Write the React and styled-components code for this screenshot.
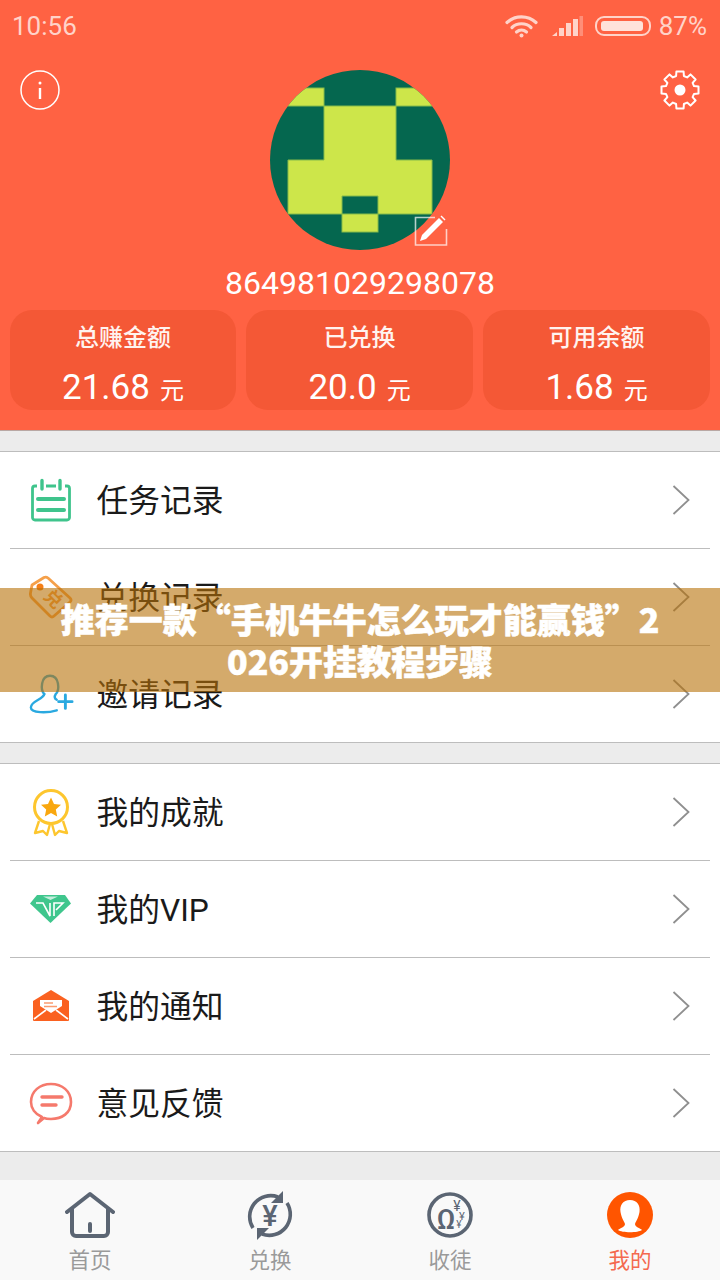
import React from 'react';
import styled, { createGlobalStyle } from 'styled-components';

const font = `Roboto, 'Noto Sans CJK SC', sans-serif`;

const GlobalStyle = createGlobalStyle`
    html, body {
        margin: 0;
        padding: 0;
        background: #ececec;
    }
    * {
        box-sizing: border-box;
    }
`;

const Screen = styled.div`
    position: relative;
    display: flex;
    flex-direction: column;
    width: 720px;
    height: 1280px;
    overflow: hidden;
    background: #ececec;
    font-family: ${font};
`;

const Header = styled.header`
    height: 431px;
    flex-shrink: 0;
    background: #ff6243;
    border-bottom: 1px solid #b9a8a4;
`;

const StatusBar = styled.div`
    display: flex;
    align-items: center;
    height: 48px;
    padding: 4px 13px 0 12px;
    color: #ffd3c9;
    font-size: 26px;
`;

const Clock = styled.span`
    margin-right: auto;
`;

const StatusIcon = styled.svg`
    display: block;
    margin-right: ${(p) => p.$gap}px;
`;

const TopRow = styled.div`
    display: flex;
    justify-content: space-between;
    align-items: flex-start;
    margin-top: 22px;
    padding: 0 20px;
`;

const Avatar = styled.div`
    position: relative;
    width: 180px;
    height: 180px;
`;

const EditBadge = styled.svg`
    position: absolute;
    left: 144px;
    top: 144px;
`;

const UserId = styled.div`
    margin-top: 13px;
    height: 40px;
    line-height: 40px;
    text-align: center;
    color: #fff;
    font-size: 32px;
`;

const Stats = styled.div`
    display: grid;
    grid-template-columns: 226px 227px 227px;
    gap: 10px;
    margin-top: 7px;
    padding: 0 10px;
`;

const StatCard = styled.div`
    height: 100px;
    border-radius: 22px;
    background: #f45836;
    color: #fff;
    text-align: center;
`;

const StatTitle = styled.div`
    padding-top: 11px;
    line-height: 34px;
    font-size: 24px;
    font-weight: 500;
    color: #fff3ef;
`;

const StatValue = styled.div`
    margin-top: 10px;
    line-height: 46px;
    font-size: 35px;
`;

const StatUnit = styled.span`
    margin-left: 10px;
    font-size: 24px;
`;

const List = styled.section`
    flex-shrink: 0;
    margin-top: ${(p) => p.$top}px;
    background: #fff;
    border-top: 1px solid #bdbdbd;
    border-bottom: 1px solid #bdbdbd;
`;

const Row = styled.div`
    display: flex;
    align-items: center;
    height: 97px;
    margin: 0 10px;
    padding: 0 20px 0 18px;
    border-bottom: 1px solid #bdbdbd;

    &:last-child {
        height: 96px;
        border-bottom: 0;
    }
`;

const RowIcon = styled.div`
    display: flex;
    justify-content: center;
    align-items: center;
    flex-shrink: 0;
    width: 46px;
    height: 54px;
    margin-right: 22.5px;
`;

const RowLabel = styled.span`
    flex: 1;
    margin-bottom: 4px;
    color: #1a1a1a;
    font-size: 31.75px;
`;

const Nav = styled.nav`
    display: grid;
    grid-template-columns: repeat(4, 1fr);
    height: 100px;
    margin-top: auto;
    background: #f9f9f9;
`;

const NavItem = styled.div`
    display: flex;
    flex-direction: column;
    align-items: center;
    padding-top: 11px;
`;

const NavLabel = styled.span`
    margin-top: 8px;
    line-height: 24px;
    font-size: 21.5px;
    color: ${(p) => (p.$active ? '#f4694f' : '#9a9a9a')};
`;

const Banner = styled.div`
    position: absolute;
    left: 0;
    top: 588px;
    display: flex;
    align-items: center;
    justify-content: center;
    width: 720px;
    height: 104px;
    padding: 0 55px;
    background: rgba(184, 113, 8, 0.6);
    color: #fff;
    font-family: 'Noto Sans CJK SC', sans-serif;
    font-size: 34px;
    font-weight: 900;
    line-height: 42px;
    text-align: center;
    word-break: break-all;
    -webkit-text-stroke: 0.5px #fff;
`;

const gearPoints = Array.from({ length: 8 }, (_, i) => {
    const a = (i * Math.PI) / 4 - Math.PI / 2;
    const pt = (r, d) =>
        `${(20 + r * Math.cos(a + d)).toFixed(1)},${(20 + r * Math.sin(a + d)).toFixed(1)}`;
    return [pt(14.5, -0.27), pt(18.8, -0.19), pt(18.8, 0.19), pt(14.5, 0.27)].join(' ');
}).join(' ');

const WifiIcon = () => (
    <StatusIcon $gap={14} width="33" height="24" viewBox="0 0 33 24" fill="none" stroke="#ffd3c9" strokeWidth="3.2" strokeLinecap="round">
        <path d="M2 8.5C10 1 23 1 31 8.5" />
        <path d="M7 13.5C12 8.5 21 8.5 26 13.5" />
        <path d="M11.5 18C14.5 15.5 18.5 15.5 21.5 18" />
        <circle cx="16.5" cy="21.5" r="2" fill="#ffd3c9" stroke="none" />
    </StatusIcon>
);

const SignalIcon = () => (
    <StatusIcon $gap={12} width="31" height="20" viewBox="0 0 31 20" fill="#ffd3c9">
        <path d="M0 20l5-4v4z" />
        <rect x="7" y="12" width="5" height="8" />
        <rect x="14" y="7" width="5" height="13" />
        <rect x="21" y="3" width="5" height="17" />
        <rect x="27.5" y="0" width="3.5" height="20" opacity="0.4" />
    </StatusIcon>
);

const BatteryIcon = () => (
    <StatusIcon $gap={7} width="57" height="20" viewBox="0 0 57 20" fill="none">
        <rect x="1" y="1" width="54" height="18" rx="8" stroke="#ffd3c9" strokeWidth="2" />
        <rect x="6" y="5" width="42" height="10" rx="3" fill="#ffe2da" />
    </StatusIcon>
);

const InfoIcon = () => (
    <svg width="40" height="40" viewBox="0 0 40 40" fill="none" stroke="#fff">
        <circle cx="20" cy="20" r="19" strokeWidth="1.5" />
        <circle cx="20" cy="13" r="1.5" fill="#fff" stroke="none" />
        <path d="M20 18v11" strokeWidth="2.4" />
    </svg>
);

const GearIcon = () => (
    <svg width="40" height="40" viewBox="0 0 40 40">
        <polygon points={gearPoints} fill="none" stroke="#fff" strokeWidth="2" strokeLinejoin="round" />
        <circle cx="20" cy="20" r="5.5" fill="#fff" />
    </svg>
);

const AvatarArt = () => (
    <svg width="180" height="180" viewBox="0 0 180 180">
        <defs>
            <clipPath id="avatarClip">
                <circle cx="90" cy="90" r="90" />
            </clipPath>
        </defs>
        <g clipPath="url(#avatarClip)">
            <rect width="180" height="180" fill="#05674f" />
            <g fill="#cde64a" stroke="#86bb4a" strokeWidth="1">
                <rect x="0" y="18" width="54" height="18" />
                <rect x="126" y="18" width="54" height="18" />
                <path d="M54 36h72v54h36v54H108v-18H72v18H18V90h36z" />
                <rect x="72" y="144" width="36" height="18" />
            </g>
        </g>
    </svg>
);

const EditIcon = () => (
    <EditBadge width="36" height="34" viewBox="0 0 36 34" fill="none">
        <path d="M21 3.500H1.500V31H32.500V15" stroke="#ffffff" strokeOpacity="0.7" strokeWidth="1.600" />
        <path d="M6 27l2-6L25 4l4 4L12 25z" fill="#fff" />
        <path d="M26.500 2.500l1-1 4 4-1 1z" fill="#fff" />
    </EditBadge>
);

const TaskIcon = () => (
    <svg width="40" height="44" viewBox="0 0 40 44" fill="none" stroke="#3fc48c">
        <path d="M6 8H4A2.500 2.500 0 0 0 1.500 10.500v29A2.500 2.500 0 0 0 4 42h32a2.500 2.500 0 0 0 2.500-2.500v-29A2.500 2.500 0 0 0 36 8H34M15 8h10" strokeWidth="2.800" />
        <path d="M11 2.500V11M29 2.500V11" strokeWidth="3.400" strokeLinecap="round" />
        <path d="M7 21H33M7 32H33" strokeWidth="4" strokeLinecap="round" />
    </svg>
);

const TagIcon = () => (
    <svg width="44" height="46" viewBox="0 0 44 46" fill="none" stroke="#f5a04a">
        <path d="M3 11L15 3.500Q17 2.500 19 4L41 24Q43 26 41 28L25 42Q23 44 21 42L3 24Q1 22 1.500 19Z" strokeWidth="2.800" strokeLinejoin="round" />
        <circle cx="11" cy="13" r="3.500" fill="#f57f17" stroke="none" />
        <text x="24" y="31" fontSize="18" fontWeight="700" fill="#f5a04a" stroke="none" textAnchor="middle" transform="rotate(45 24 25)">兑</text>
    </svg>
);

const InviteIcon = () => (
    <svg width="48" height="44" viewBox="0 0 48 44" fill="none" stroke="#2aa9e0" strokeWidth="2.500" strokeLinecap="round">
        <path d="M17 22C13 18 13 3 23 3S33 18 29 22C27 25 28 27 30 28" />
        <path d="M17 22C16 28 3 29 3 36C3 42 20 42 30 39" />
        <path d="M32 30H46M39 23V37" strokeWidth="3" />
    </svg>
);

const MedalIcon = () => (
    <svg width="40" height="52" viewBox="0 0 40 52" fill="none" stroke="#fdc62e">
        <path d="M8 35L4 47l8-2 4 4 3-11M32 35l4 12-8-2-4 4-3-11" strokeWidth="2.400" strokeLinejoin="round" />
        <circle cx="20" cy="21" r="16.500" strokeWidth="3" fill="#fff" />
        <path d="M20 11.500l3 6.500 7 .8-5.200 4.700 1.400 7L20 27l-6.200 3.500 1.400-7L10 18.800l7-.8z" fill="#f9a70e" stroke="none" />
    </svg>
);

const DiamondIcon = () => (
    <svg width="42" height="32" viewBox="0 0 42 32">
        <path d="M7 2H35L41 10.500 20.500 30 0 10.500z" fill="#3fc68d" />
        <path d="M13 3.500L20.500 7 28 3.500z" fill="#fff" opacity="0.7" />
        <path d="M6 10H13L20 23V10M24 23V10H33L26 17" fill="none" stroke="#fff" strokeWidth="1.600" />
    </svg>
);

const MailIcon = () => (
    <svg width="38" height="34" viewBox="0 0 38 34">
        <path d="M1 12L19 1 37 12V31a1 1 0 0 1-1 1H2a1 1 0 0 1-1-1z" fill="#fa6120" />
        <path d="M8 11H30V17L19 24 8 17z" fill="#fff" />
        <path d="M12 14h9M12 17.500h13" stroke="#fa9c70" strokeWidth="1.500" />
        <path d="M2 30L14 21M36 30L24 21" stroke="#fff" strokeWidth="1.600" />
    </svg>
);

const ChatIcon = () => (
    <svg width="44" height="44" viewBox="0 0 44 44" fill="none" stroke="#f5796c">
        <path d="M13 36C6 33 2 27 2 21 2 10 11 3 22 3S42 10 42 21 33 38 22 38C19 38 17 38 15 37L9 42z" strokeWidth="2.600" strokeLinejoin="round" />
        <path d="M13 16H33M13 24H27" strokeWidth="3.400" strokeLinecap="round" />
    </svg>
);

const Chevron = () => (
    <svg width="18" height="30" viewBox="0 0 18 30" fill="none" stroke="#8f8f8f" strokeWidth="1.800">
        <path d="M1.500 1L16.500 15 1.500 29" />
    </svg>
);

const HomeIcon = () => (
    <svg width="50" height="50" viewBox="0 0 50 50" fill="none" stroke="#5b6573" strokeWidth="4" strokeLinecap="round" strokeLinejoin="round">
        <path d="M2 21L25 3l23 18" />
        <path d="M7 18V41a4 4 0 0 0 4 4H39a4 4 0 0 0 4-4V18" />
        <path d="M25 33v7" />
    </svg>
);

const ExchangeIcon = () => (
    <svg width="50" height="50" viewBox="0 0 50 50" fill="none" stroke="#5b6573" strokeWidth="3.600">
        <path d="M8 37A21 21 0 0 1 33 6" />
        <path d="M42 12A21 21 0 0 1 17 43" />
        <path d="M38 0V12H26z" fill="#5b6573" stroke="none" />
        <path d="M12 49V37H24z" fill="#5b6573" stroke="none" />
        <text x="25" y="35" fontSize="29" fontWeight="500" fill="#5b6573" stroke="none" textAnchor="middle">¥</text>
    </svg>
);

const DiscipleIcon = () => (
    <svg width="50" height="50" viewBox="0 0 50 50" fill="none" stroke="#5b6573" strokeWidth="3.600">
        <circle cx="25" cy="24" r="21" />
        <g fill="#5b6573" stroke="none" fontFamily="Roboto, sans-serif">
            <text x="21" y="38" fontSize="28" fontWeight="500" textAnchor="middle">Ω</text>
            <text x="32" y="20" fontSize="14" textAnchor="middle">¥</text>
            <text x="37" y="29" fontSize="11" textAnchor="middle">¥</text>
            <text x="34" y="37" fontSize="10" textAnchor="middle">¥</text>
        </g>
    </svg>
);

const MeIcon = () => (
    <svg width="50" height="50" viewBox="0 0 50 50">
        <circle cx="25" cy="24" r="23" fill="#ff5500" />
        <path d="M25 9C18 9 14.500 14 15.500 21 16.500 27 19 30 20 33 20 36 15 37 13 39 17 42 33 42 37 39 35 37 30 36 30 33 31 30 33.500 27 34.500 21 35.500 14 32 9 25 9z" fill="#fff" />
    </svg>
);

const AvatarBox = () => (
    <Avatar>
        <AvatarArt />
        <EditIcon />
    </Avatar>
);

const stats = [
    { title: '总赚金额', value: '21.68' },
    { title: '已兑换', value: '20.0' },
    { title: '可用余额', value: '1.68' },
];

const recordRows = [
    { label: '任务记录', Icon: TaskIcon },
    { label: '兑换记录', Icon: TagIcon },
    { label: '邀请记录', Icon: InviteIcon },
];

const profileRows = [
    { label: '我的成就', Icon: MedalIcon },
    { label: '我的VIP', Icon: DiamondIcon },
    { label: '我的通知', Icon: MailIcon },
    { label: '意见反馈', Icon: ChatIcon },
];

const tabs = [
    { label: '首页', Icon: HomeIcon },
    { label: '兑换', Icon: ExchangeIcon },
    { label: '收徒', Icon: DiscipleIcon },
    { label: '我的', Icon: MeIcon, active: true },
];

const MenuList = ({ rows, top }) => (
    <List $top={top}>
        {rows.map(({ label, Icon }) => (
            <Row key={label}>
                <RowIcon>
                    <Icon />
                </RowIcon>
                <RowLabel>{label}</RowLabel>
                <Chevron />
            </Row>
        ))}
    </List>
);

const App = () => (
    <Screen>
        <GlobalStyle />
        <Header>
            <StatusBar>
                <Clock>10:56</Clock>
                <WifiIcon />
                <SignalIcon />
                <BatteryIcon />
                <span>87%</span>
            </StatusBar>
            <TopRow>
                <InfoIcon />
                <AvatarBox />
                <GearIcon />
            </TopRow>
            <UserId>864981029298078</UserId>
            <Stats>
                {stats.map((s) => (
                    <StatCard key={s.title}>
                        <StatTitle>{s.title}</StatTitle>
                        <StatValue>
                            {s.value}
                            <StatUnit>元</StatUnit>
                        </StatValue>
                    </StatCard>
                ))}
            </Stats>
        </Header>
        <MenuList rows={recordRows} top={20} />
        <MenuList rows={profileRows} top={20} />
        <Nav>
            {tabs.map(({ label, Icon, active }) => (
                <NavItem key={label}>
                    <Icon />
                    <NavLabel $active={active}>{label}</NavLabel>
                </NavItem>
            ))}
        </Nav>
        <Banner>推荐一款“手机牛牛怎么玩才能赢钱”2026开挂教程步骤</Banner>
    </Screen>
);

export default App;
